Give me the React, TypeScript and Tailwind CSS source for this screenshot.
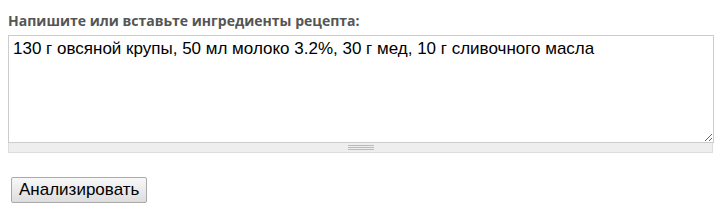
import { useState } from "react";

export default function App() {
  const [text, setText] = useState(
    "130 г овсяной крупы, 50 мл молоко 3.2%, 30 г мед, 10 г сливочного масла"
  );

  return (
    <div className="bg-white px-2 pt-[11px] w-[728px] h-[221px]">
      <label
        htmlFor="ingredients"
        className="block text-[14px] font-bold leading-[20px] text-[#555] font-['Open_Sans',sans-serif] mb-[4px]"
      >
        Напишите или вставьте ингредиенты рецепта:
      </label>

      <div className="w-[706px]">
        <textarea
          id="ingredients"
          value={text}
          onChange={(e) => setText(e.target.value)}
          className="block w-[706px] h-[108px] border border-[#ccc] bg-white px-1 pt-[3px] text-[17px] leading-[20px] text-black font-['Liberation_Sans',Arial,sans-serif] outline-none"
        />
        {/* grippie */}
        <div className="w-[705px] h-[10px] bg-[#eee] border border-t-0 border-[#ddd] flex items-center justify-center">
          <div className="w-[26px] flex flex-col gap-[1px]">
            <div className="h-[1px] bg-[#bbb]" />
            <div className="h-[1px] bg-[#bbb]" />
            <div className="h-[1px] bg-[#bbb]" />
          </div>
        </div>
      </div>

      <div className="mt-[24px] pl-[3px]">
        <button
          type="button"
          className="h-[26px] px-[7px] border border-[#a9a9a9] rounded-[2px] bg-gradient-to-b from-[#f8f8f8] to-[#dddddd] text-[17px] text-black font-['Liberation_Sans',Arial,sans-serif] leading-[20px]"
        >
          Анализировать
        </button>
      </div>
    </div>
  );
}
